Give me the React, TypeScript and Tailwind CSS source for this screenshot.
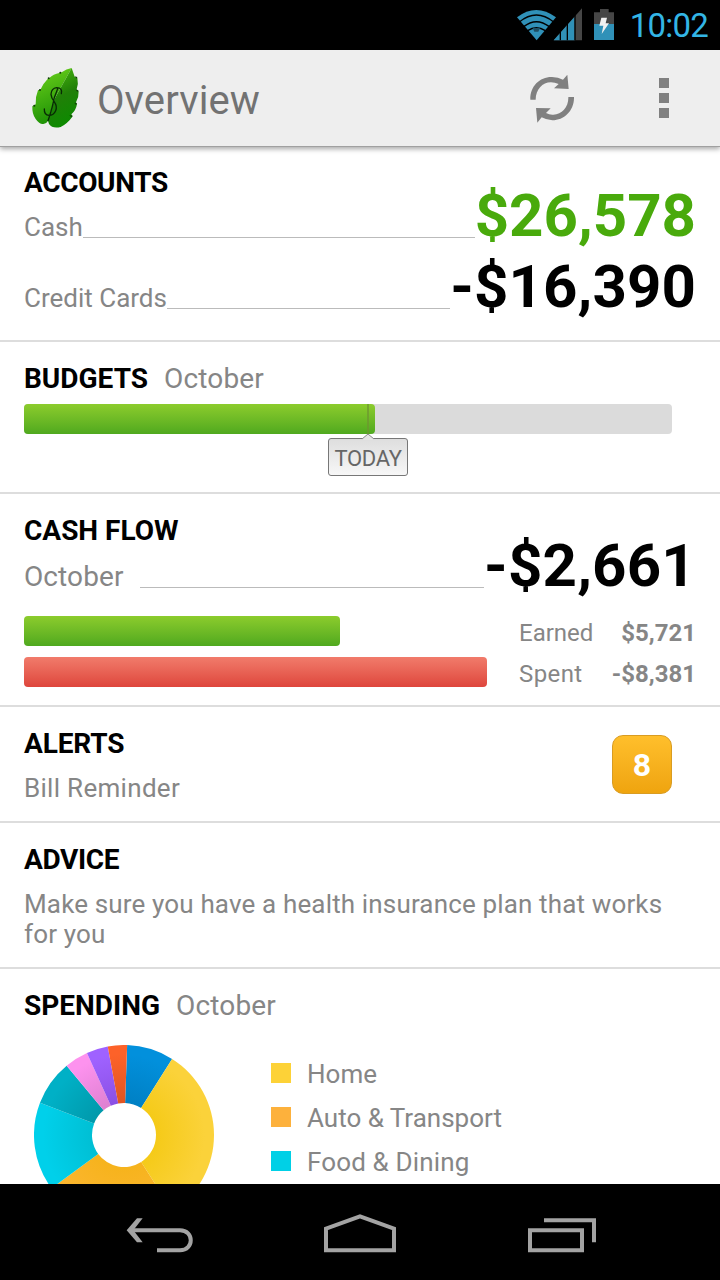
import type { ReactNode } from "react";

const SLICES = [
  { from: 2, to: 32.3, fill: "url(#blue)" },
  { from: 32.3, to: 147.5, fill: "url(#yellow)" },
  { from: 147.5, to: 233.7, fill: "url(#amber)" },
  { from: 233.7, to: 291, fill: "url(#cyan)" },
  { from: 291, to: 320.4, fill: "url(#teal)" },
  { from: 320.4, to: 335.7, fill: "url(#pink)" },
  { from: 335.7, to: 349.6, fill: "url(#purple)" },
  { from: 349.6, to: 362, fill: "url(#orange)" },
];

const GRADIENTS = [
  ["blue", "#0080c4", "#0290dc"],
  ["yellow", "#f5ca18", "#fbd23a"],
  ["amber", "#f6b31c", "#fcb630"],
  ["cyan", "#00bfd4", "#00d0ea"],
  ["teal", "#0099ab", "#00b0c6"],
  ["pink", "#dd80d0", "#fd92ee"],
  ["purple", "#8a50e4", "#9f62ff"],
  ["orange", "#e05522", "#fd6229"],
];

function slicePath(from: number, to: number) {
  const pt = (r: number, deg: number) => {
    const a = (deg * Math.PI) / 180;
    return `${(90 + r * Math.sin(a)).toFixed(2)} ${(90 - r * Math.cos(a)).toFixed(2)}`;
  };
  return `M${pt(90, from)}A90 90 0 0 1 ${pt(90, to)}L${pt(32, to)}A32 32 0 0 0 ${pt(32, from)}Z`;
}

function Donut() {
  return (
    <svg width="180" height="180" viewBox="0 0 180 180" className="shrink-0">
      <defs>
        {GRADIENTS.map(([id, inner, outer]) => (
          <radialGradient key={id} id={id} gradientUnits="userSpaceOnUse" cx="90" cy="90" r="90">
            <stop offset="0.35" stopColor={inner} />
            <stop offset="0.9" stopColor={outer} />
          </radialGradient>
        ))}
      </defs>
      {SLICES.map((s) => (
        <path key={s.from} d={slicePath(s.from, s.to)} fill={s.fill} />
      ))}
    </svg>
  );
}

function StatusBar() {
  return (
    <div className="flex h-[50px] shrink-0 items-center justify-end bg-black pr-3">
      <svg width="105" height="34" viewBox="45 24 315 102" className="mr-[10px]">
        <path d="M51 52Q108 8 168 52L110 121Z" fill="#3091b8" />
        <g fill="none" stroke="#000" strokeWidth="4.5">
          <path d="M58 66Q109 24 161 66" />
          <path d="M71 80Q109 50 148 80" />
          <path d="M83 92Q109 75 136 92" />
        </g>
        <path d="M98 84h22l-5 11h-12z" fill="#1d4f64" />
        <path d="M246 25V121H161Z" fill="#464646" />
        <path d="M224 50V121H161Z" fill="#3091b8" />
        <path d="M181 90V121M202 70V121M225 40V121" stroke="#000" strokeWidth="4" />
        <path d="M300 27h26v10h16v35h-60V37h18z" fill="#464646" />
        <path d="M282 72h60v48h-60z" fill="#3091b8" />
        <path d="M304 53h17l-4 17h10l-22 32 5-25h-12z" fill="#f1f1f1" />
      </svg>
      <span className="text-[33px] leading-none tracking-[-0.8px] text-[#33b5e5]">10:02</span>
    </div>
  );
}

function Leaf() {
  return (
    <svg width="52" height="65" viewBox="90 75 156 195" className="-mt-[2px]">
      <defs>
        <linearGradient id="leafLight" x1="0" y1="0" x2="0.3" y2="1">
          <stop offset="0" stopColor="#6fd41c" />
          <stop offset="1" stopColor="#1f9206" />
        </linearGradient>
        <linearGradient id="leafDark" x1="0.2" y1="0" x2="0.5" y2="1">
          <stop offset="0" stopColor="#49b80d" />
          <stop offset="0.5" stopColor="#217f08" />
          <stop offset="1" stopColor="#0c8b00" />
        </linearGradient>
      </defs>
      <path d="M215 84Q199 87 185 97L178 99Q160 102 148 114L143 117Q128 132 122 148L114 151Q106 170 107 193L97 199Q96 223 107 237Q119 254 130 252Q140 251 144 242L163 178Z" fill="url(#leafLight)" />
      <path d="M215 84Q219 96 224 110L232 113Q236 130 230 148L236 153Q237 170 228 187L231 192Q228 211 214 223L218 229Q203 251 182 261Q157 267 147 252L144 242L163 178Z" fill="url(#leafDark)" />
      <g fill="#123d0a">
        <circle cx="181" cy="98" r="3" />
        <circle cx="146" cy="115" r="3" />
        <circle cx="120" cy="150" r="3" />
        <circle cx="103" cy="197" r="3" />
        <path d="M224 109l8 2-2 5zM227 149l8 2-2 5zM223 188l8 2-3 5zM208 226l10 1-4 5z" />
      </g>
      <path d="M184 161Q188 143 170 143Q154 145 153 163Q154 174 162 184Q173 199 167 212Q161 226 147 226Q132 225 133 207M174 144Q161 173 157 199Q151 222 144 242" fill="none" stroke="#082b05" strokeWidth="4" strokeLinecap="round" />
    </svg>
  );
}

function ActionBar() {
  return (
    <header className="z-10 flex h-[97px] shrink-0 items-center border-b border-[#a0a0a0] bg-[#eeeeee] pr-[51px] pl-[30px] shadow-[0_2px_5px_rgba(0,0,0,0.35)]">
      <Leaf />
      <h1 className="mt-[5px] ml-[15px] text-[40px] leading-none font-normal tracking-[0.1px] text-[#727272]">Overview</h1>
      <svg width="44" height="50" viewBox="90 222 132 150" className="mt-[2px] ml-auto" fill="#808080">
        <path d="M91 299C90 258 120 230 156 231Q175 231 189 239L202 224L206 267L162 265L176 252Q164 247 153 247C127 247 107 269 107 299Z" />
        <path d="M222 291C223 332 193 361 157 361Q139 360 125 352L112 368L108 324L152 325L138 339Q149 345 160 344C186 343 206 321 205 291Z" />
      </svg>
      <div className="ml-[85px] flex flex-col gap-[5px]">
        <i className="size-2.5 bg-[#808080]" />
        <i className="size-2.5 bg-[#808080]" />
        <i className="size-2.5 bg-[#808080]" />
      </div>
    </header>
  );
}

function Heading({ title, note, className = "" }: { title: string; note?: string; className?: string }) {
  return (
    <div className={`flex h-[26px] items-baseline leading-[26px] whitespace-nowrap ${className}`}>
      <h2 className="font-bold text-black">{title}</h2>
      {note && <span className="ml-4 tracking-[0.15px]">{note}</span>}
    </div>
  );
}

function Section({ className, children }: { className: string; children: ReactNode }) {
  return <section className={`shrink-0 border-b-2 border-[#dddddd] px-6 ${className}`}>{children}</section>;
}

function AmountRow({ label, amount, className }: { label: string; amount: string; className: string }) {
  return (
    <div className={`flex h-11 items-baseline leading-[44px] whitespace-nowrap ${className}`}>
      <span>{label}</span>
      <span className="flex-1 translate-y-[2px] border-b border-[#bbbbbb]" />
      <span className="text-[60px] font-bold">{amount}</span>
    </div>
  );
}

const GREEN = "rounded-[4px] bg-linear-to-b from-[#8ccc2d] to-[#4fa91f]";

export default function App() {
  return (
    <div className="flex h-[1280px] w-[720px] flex-col overflow-hidden bg-white font-[Roboto,sans-serif] text-[28px] text-[#868686]">
      <StatusBar />
      <ActionBar />
      <main className="flex min-h-0 flex-1 flex-col overflow-hidden">
        <Section className="h-[195px] pt-[23px]">
          <Heading title="ACCOUNTS" className="tracking-[-0.35px]" />
          <AmountRow label="Cash" amount="$26,578" className="-mt-[2px] text-[26px] [&>span:last-child]:text-[#49aa0c]" />
          <AmountRow label="Credit Cards" amount="-$16,390" className="mt-[27px] text-[26px] [&>span:last-child]:tracking-[0.1px] [&>span:last-child]:text-black" />
        </Section>

        <Section className="h-[152px] pt-6">
          <Heading title="BUDGETS" note="October" />
          <div className="relative mt-3 h-[30px] w-[648px] rounded-[4px] bg-[#dbdbdb]">
            <div className={`h-full w-[351px] ${GREEN}`} />
            <i className="absolute top-0 left-[343px] h-full w-[2px] bg-[#6d9630]/70" />
            <div className="absolute top-[34px] left-[304px] flex h-[38px] w-20 items-center justify-center rounded-[3px] border border-[#777] bg-linear-to-b from-[#dedede] to-[#f7f7f7] pt-[3px] text-[22px] leading-none tracking-[-0.3px] text-[#666]">
              TODAY
            </div>
            <svg className="absolute top-[29px] left-[338px]" width="12" height="7" viewBox="0 0 12 7">
              <path d="M0 6L6 1L12 6V7H0Z" fill="#e4e4e4" />
              <path d="M0 6L6 1L12 6" fill="none" stroke="#888" />
            </svg>
          </div>
        </Section>

        <Section className="h-[213px] pt-6">
          <Heading title="CASH FLOW" />
          <AmountRow label="October" amount="-$2,661" className="[&>span:first-child]:mr-4 [&>span:first-child]:tracking-[0.1px] [&>span:last-child]:tracking-[0.2px] [&>span:last-child]:text-black" />
          <div className="mt-7 flex justify-between">
            <div className="flex flex-col gap-[11px]">
              <div className={`h-[30px] w-[316px] ${GREEN}`} />
              <div className="h-[30px] w-[463px] rounded-[4px] bg-linear-to-b from-[#f17b6b] to-[#de453c]" />
            </div>
            <dl className="grid w-[177px] grid-cols-[auto_1fr] gap-y-[11px] pt-[2px] text-2xl leading-[30px]">
              <dt>Earned</dt>
              <dd className="text-right font-bold">$5,721</dd>
              <dt className="tracking-[0.4px]">Spent</dt>
              <dd className="text-right font-bold">-$8,381</dd>
            </dl>
          </div>
        </Section>

        <Section className="flex h-[116px] justify-between pt-6">
          <div>
            <Heading title="ALERTS" className="tracking-[-0.15px]" />
            <p className="mt-4 text-[26px] leading-[30px] tracking-[0.3px]">Bill Reminder</p>
          </div>
          <div className="mt-1 mr-6 flex h-[59px] w-[60px] items-center justify-center rounded-[11px] border border-[#d99c22] bg-linear-to-b from-[#ffbf2b] to-[#efa40e] text-[32px] font-bold text-white">
            8
          </div>
        </Section>

        <Section className="h-[146px] pt-6">
          <Heading title="ADVICE" className="tracking-[-0.35px]" />
          <p className="mt-4 text-[26px] leading-[30px] tracking-[0.15px]">Make sure you have a health insurance plan that works for you</p>
        </Section>

        <section className="px-6 pt-6">
          <Heading title="SPENDING" note="October" />
          <div className="mt-[26px] ml-2.5 flex gap-[57px]">
            <Donut />
            <ul className="flex flex-col pt-[6px] text-[26px] leading-[44px] [&>li>span]:-mb-[2px]">
              <li className="flex h-11 items-center gap-4">
                <i className="size-5 bg-[#fdd237]" />
                <span>Home</span>
              </li>
              <li className="flex h-11 items-center gap-4">
                <i className="size-5 bg-[#fdb13c]" />
                <span>Auto &amp; Transport</span>
              </li>
              <li className="flex h-11 items-center gap-4">
                <i className="size-5 bg-[#00d0e6]" />
                <span className="tracking-[0.15px]">Food &amp; Dining</span>
              </li>
            </ul>
          </div>
        </section>
      </main>
      <nav className="flex h-24 shrink-0 items-center justify-between bg-black pt-0.5 pr-[123px] pl-[126px]">
        <svg width="68" height="40" viewBox="78 68 204 120" fill="none" stroke="#a3a3a3" strokeWidth="12">
          <path d="M171 180H240C283 180 283 120 240 120H92" />
          <path d="M111 84H128L100 120L128 156H111L80 120Z" fill="#a3a3a3" stroke="none" />
        </svg>
        <svg width="74" height="40" viewBox="669 68 222 120" fill="none" stroke="#a3a3a3" strokeWidth="12" className="mr-[2px]">
          <path d="M678 180V115L780 78L882 115V180Z" />
        </svg>
        <svg width="70" height="40" viewBox="1281 68 210 120" fill="none" stroke="#a3a3a3" strokeWidth="12">
          <path d="M1290 120H1446V180H1290ZM1332 90H1482V156" />
        </svg>
      </nav>
    </div>
  );
}
